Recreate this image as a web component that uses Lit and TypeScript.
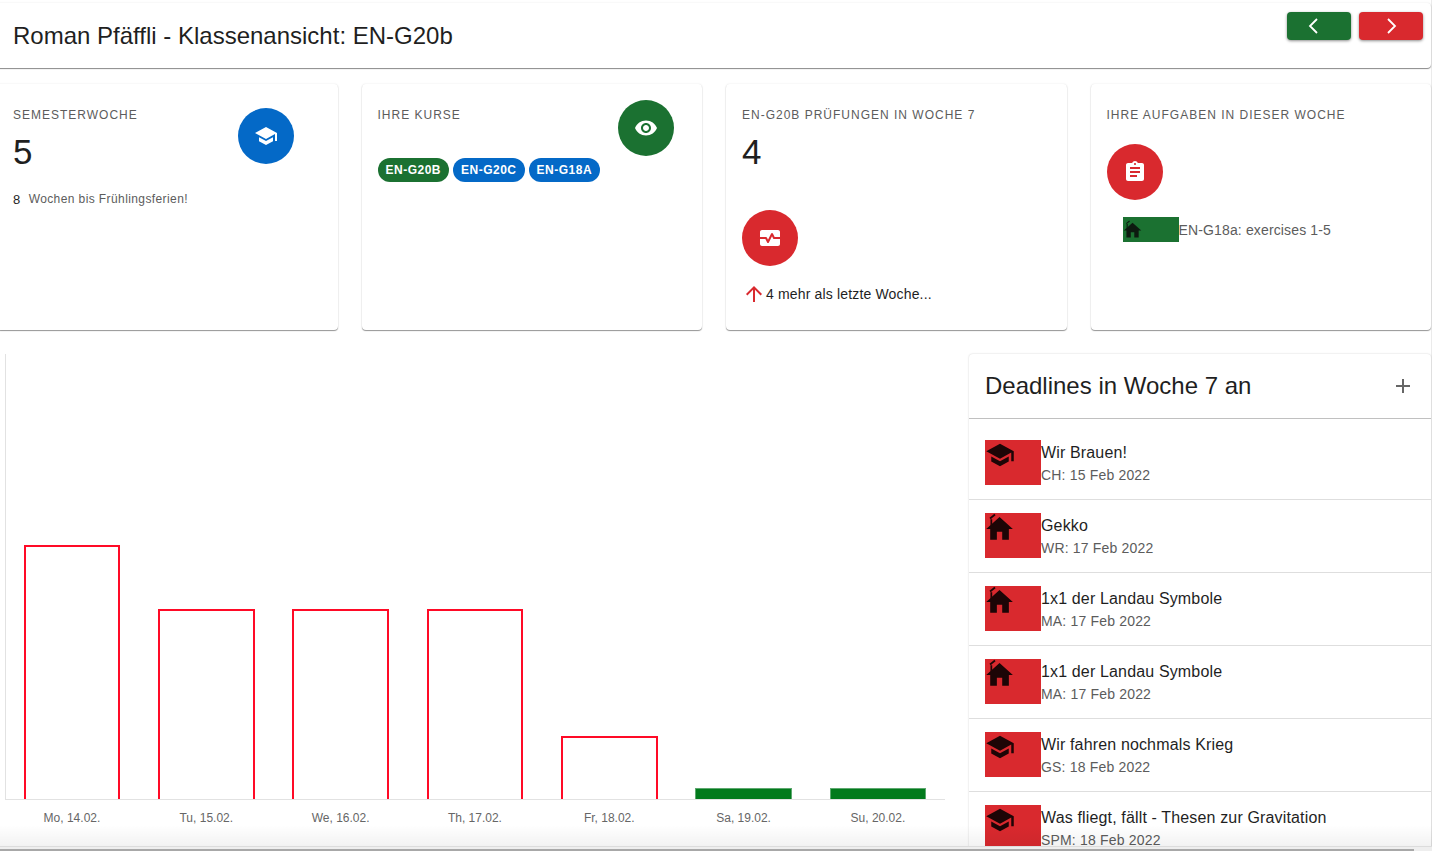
import { LitElement, html, css, svg } from "lit";
import { customElement } from "lit/decorators.js";

const ICONS = {
    school: svg`<path d="M5 13.18v4L12 21l7-3.82v-4L12 17l-7-3.82zM12 3L1 9l11 6 9-4.91V17h2V9L12 3z"/>`,
    eye: svg`<path d="M12 4.5C7 4.5 2.73 7.61 1 12c1.73 4.39 6 7.5 11 7.5s9.27-3.11 11-7.5c-1.73-4.39-6-7.5-11-7.5zM12 17c-2.76 0-5-2.24-5-5s2.24-5 5-5 5 2.24 5 5-2.24 5-5 5zm0-8c-1.66 0-3 1.34-3 3s1.34 3 3 3 3-1.34 3-3-1.34-3-3-3z"/>`,
    pulse: svg`<path d="M15.11 12.45L14 10.24l-3.11 6.21c-.16.33-.51.55-.89.55s-.73-.22-.89-.55L7.38 13H2v5c0 1.1.9 2 2 2h16c1.1 0 2-.9 2-2v-5h-6c-.38 0-.72-.21-.89-.55z"/><path d="M20 4H4c-1.1 0-2 .9-2 2v5h6c.38 0 .73.22.89.55L10 13.76l3.11-6.21c.34-.68 1.45-.68 1.79 0L16.62 11H22V6c0-1.1-.9-2-2-2z"/>`,
    clipboard: svg`<path d="M19 3h-4.18C14.4 1.84 13.3 1 12 1c-1.3 0-2.4.84-2.82 2H5c-1.1 0-2 .9-2 2v14c0 1.1.9 2 2 2h14c1.1 0 2-.9 2-2V5c0-1.1-.9-2-2-2zm-7 0c.55 0 1 .45 1 1s-.45 1-1 1-1-.45-1-1 .45-1 1-1zm2 14H7v-2h7v2zm3-4H7v-2h10v2zm0-4H7V7h10v2z"/>`,
    // house with a small chimney and smoke stroke
    home: svg`<g transform="translate(-1.1 0)"><path d="M10 20v-6h4v6h5v-8h3L12 3 2 12h3v8z"/><path d="M5.2 9.6V4.6h1.3v3.9z"/><path d="M4.9 4.1L8.6 1.1" fill="none" stroke="currentColor" stroke-width="1.3"/></g>`,
    arrowUp: svg`<path d="M4 12l1.41 1.41L11 7.83V20h2V7.83l5.58 5.59L20 12l-8-8-8 8z"/>`,
    left: svg`<path d="M15 5l-7 7 7 7" fill="none" stroke="currentColor" stroke-width="1.8"/>`,
    right: svg`<path d="M9 5l7 7-7 7" fill="none" stroke="currentColor" stroke-width="1.8"/>`,
    plus: svg`<path d="M19 13h-6v6h-2v-6H5v-2h6V5h2v6h6v2z"/>`,
};

const icon = (name: keyof typeof ICONS, cls = "") =>
    html`<svg class=${cls} viewBox="0 0 24 24" fill="currentColor">${ICONS[name]}</svg>`;

const BARS = [
    { label: "Mo, 14.02.", height: 254, free: false },
    { label: "Tu, 15.02.", height: 190, free: false },
    { label: "We, 16.02.", height: 190, free: false },
    { label: "Th, 17.02.", height: 190, free: false },
    { label: "Fr, 18.02.", height: 63, free: false },
    { label: "Sa, 19.02.", height: 11, free: true },
    { label: "Su, 20.02.", height: 11, free: true },
];

const DEADLINES = [
    { title: "Wir Brauen!", sub: "CH: 15 Feb 2022", kind: "school" },
    { title: "Gekko", sub: "WR: 17 Feb 2022", kind: "home" },
    { title: "1x1 der Landau Symbole", sub: "MA: 17 Feb 2022", kind: "home" },
    { title: "1x1 der Landau Symbole", sub: "MA: 17 Feb 2022", kind: "home" },
    { title: "Wir fahren nochmals Krieg", sub: "GS: 18 Feb 2022", kind: "school" },
    { title: "Was fliegt, fällt - Thesen zur Gravitation", sub: "SPM: 18 Feb 2022", kind: "school" },
] as const;

@customElement("app-root")
export class AppRoot extends LitElement {
    static styles = css`
    :host {
      display: block;
      position: relative;
      height: 851px;
      overflow: hidden;
      background: #ffffff;
      color: #1f1f1f;
      font-family: "Liberation Sans", Arial, sans-serif;
      box-shadow: inset -1px 0 0 #ebebeb;
    }

    .page {
      display: flex;
      flex-direction: column;
      padding-top: 3px;
      width: 1431px;
    }

    .toolbar {
      display: flex;
      align-items: center;
      justify-content: space-between;
      height: 65px;
      box-sizing: border-box;
      margin-left: -4px;
      padding: 0 8px 0 17px;
      border-radius: 4px;
      background: #ffffff;
      box-shadow: 0 1px 1px rgba(0, 0, 0, 0.45), 0 0 2px rgba(0, 0, 0, 0.1);
    }

    .toolbar h1 {
      margin: 0;
      font-size: 24px;
      font-weight: 400;
      line-height: 32px;
    }

    .nav {
      display: flex;
      gap: 8px;
      align-self: flex-start;
      margin-top: 9px;
    }

    .nav button {
      display: flex;
      align-items: center;
      justify-content: center;
      width: 64px;
      height: 28px;
      padding: 0;
      border: 0;
      border-radius: 4px;
      color: #ffffff;
      box-shadow: 0 1px 3px rgba(0, 0, 0, 0.45);
    }

    .nav button.green {
      padding-right: 10px;
    }

    .nav svg {
      width: 24px;
      height: 24px;
    }

    .green {
      background: #1b7131;
    }

    .red {
      background: #d9292e;
    }

    .blue {
      background: #0469c7;
    }

    .cards {
      display: grid;
      grid-template-columns: repeat(4, 340.5px);
      gap: 24px;
      margin: 16px 0 0 -3px;
      height: 246px;
    }

    .card {
      position: relative;
      box-sizing: border-box;
      padding: 24px 16px;
      border-radius: 4px;
      background: #ffffff;
      box-shadow: 0 1px 1px rgba(0, 0, 0, 0.4), 0 0 2px rgba(0, 0, 0, 0.1);
    }

    .overline {
      font-size: 12px;
      line-height: 14px;
      letter-spacing: 1px;
      color: #5c5c5c;
      text-transform: uppercase;
    }

    .big {
      margin-top: 10px;
      font-size: 35px;
      line-height: 40px;
    }

    .circle {
      display: flex;
      align-items: center;
      justify-content: center;
      width: 56px;
      height: 56px;
      border-radius: 50%;
      color: #ffffff;
    }

    .circle svg {
      width: 24px;
      height: 24px;
    }

    .corner {
      position: absolute;
      right: 44px;
      top: 24px;
    }

    .corner.high {
      right: 28px;
      top: 16px;
    }

    .hint {
      display: flex;
      align-items: center;
      gap: 8px;
      margin-top: 18px;
      font-size: 12px;
      line-height: 16px;
      letter-spacing: 0.4px;
      color: #5c5c5c;
    }

    .hint b {
      padding-top: 2px;
      font-weight: 400;
      color: #1f1f1f;
      font-size: 13px;
    }

    .chips {
      display: flex;
      gap: 4px;
      margin-top: 36px;
    }

    .chip {
      padding: 0 8px;
      height: 24px;
      border-radius: 12px;
      color: #ffffff;
      font-size: 12px;
      font-weight: 700;
      line-height: 24px;
      letter-spacing: 0.5px;
    }

    .exam-icon {
      margin-top: 38px;
    }

    .trend {
      display: flex;
      align-items: center;
      margin-top: 16px;
      font-size: 14px;
      line-height: 24px;
      letter-spacing: 0.16px;
    }

    .trend svg {
      width: 24px;
      height: 24px;
      color: #d9292e;
    }

    .task-icon {
      margin-top: 22px;
    }

    .task {
      display: flex;
      align-items: center;
      margin: 17px 0 0 16px;
      font-size: 14px;
      letter-spacing: 0.14px;
      color: #5c5c5c;
    }

    .task-box {
      display: block;
      width: 56px;
      height: 25px;
      color: #0d1a10;
      background: #1b7131;
    }

    .task-box svg {
      display: block;
      width: 21px;
      height: 21px;
      margin-top: 3px;
      overflow: visible;
    }

    .main {
      display: flex;
      margin-top: 24px;
      height: 500px;
    }

    .chart {
      flex: none;
      width: 940.3px;
      margin-left: 4.8px;
    }

    .plot {
      display: flex;
      align-items: flex-end;
      height: 446px;
      box-sizing: border-box;
      border-bottom: 1px solid #e2e2e2;
      box-shadow: inset 1px 0 0 #e2e2e2;
    }

    .slot {
      flex: 1;
      display: flex;
      justify-content: center;
    }

    .bar {
      width: 96.8px;
      box-sizing: border-box;
      border: 2px solid #ff0a26;
      border-bottom: 0;
    }

    .bar.free {
      border: 1px solid #5da86f;
      border-bottom: 0;
      background: #027a1c;
    }

    .labels {
      display: flex;
    }

    .labels span {
      flex: 1;
      padding-top: 10px;
      text-align: center;
      font-size: 12px;
      line-height: 16px;
      color: #666666;
    }

    .panel {
      flex: none;
      width: 462px;
      margin-left: 23.9px;
      border-radius: 4px;
      background: #ffffff;
      box-shadow: 0 0 2px rgba(0, 0, 0, 0.2);
    }

    .panel-head {
      display: flex;
      align-items: center;
      justify-content: space-between;
      height: 65px;
      box-sizing: border-box;
      padding: 0 16px;
      border-bottom: 1px solid #c0c0c0;
    }

    .panel-head h2 {
      margin: 0;
      font-size: 24px;
      font-weight: 400;
    }

    .panel-head svg {
      width: 24px;
      height: 24px;
      color: #666666;
    }

    .list {
      padding-top: 8px;
    }

    .row {
      display: flex;
      box-sizing: border-box;
      height: 73px;
      padding: 13px 16px 0;
      border-bottom: 1px solid #dedede;
    }

    .row-icon {
      flex: none;
      width: 56px;
      height: 45px;
      background: #d9292e;
      color: #1d0506;
    }

    .row-icon svg {
      display: block;
      width: 32px;
      height: 32px;
      overflow: visible;
    }

    .row-icon svg.school {
      width: 30px;
      height: 30px;
    }

    .row-title {
      font-size: 16px;
      line-height: 24px;
      letter-spacing: 0.15px;
      margin-top: 1px;
    }

    .row-sub {
      font-size: 14px;
      line-height: 20px;
      color: #5c5c5c;
      letter-spacing: 0.18px;
    }

    .fade {
      position: absolute;
      left: 0;
      right: 0;
      bottom: 0;
      height: 26px;
      background: linear-gradient(to bottom, rgba(0, 0, 0, 0), rgba(0, 0, 0, 0.05) 21px);
      pointer-events: none;
    }

    .fade::after {
      content: "";
      position: absolute;
      left: 0;
      right: 0;
      bottom: 0;
      height: 5px;
      box-sizing: border-box;
      background: #eeeeee;
      border-top: 1px solid #dcdcdc;
    }

    .scrollbar {
      position: absolute;
      left: 0;
      bottom: 0;
      width: 1414px;
      height: 2px;
      background: #a8a8a8;
    }
  `;

    render() {
        return html`
      <div class="page">
        <header class="toolbar">
          <h1>Roman Pfäffli - Klassenansicht: EN-G20b</h1>
          <div class="nav">
            <button class="green">${icon("left")}</button>
            <button class="red">${icon("right")}</button>
          </div>
        </header>

        <section class="cards">
          <div class="card">
            <div class="overline">Semesterwoche</div>
            <div class="big">5</div>
            <div class="circle blue corner">${icon("school")}</div>
            <div class="hint"><b>8</b><span>Wochen bis Frühlingsferien!</span></div>
          </div>
          <div class="card">
            <div class="overline">Ihre Kurse</div>
            <div class="circle green corner high">${icon("eye")}</div>
            <div class="chips">
              <span class="chip green">EN-G20B</span>
              <span class="chip blue">EN-G20C</span>
              <span class="chip blue">EN-G18A</span>
            </div>
          </div>
          <div class="card">
            <div class="overline">EN-G20b Prüfungen in Woche 7</div>
            <div class="big">4</div>
            <div class="circle red exam-icon">${icon("pulse")}</div>
            <div class="trend">${icon("arrowUp")}<span>4 mehr als letzte Woche...</span></div>
          </div>
          <div class="card">
            <div class="overline">Ihre Aufgaben in dieser Woche</div>
            <div class="circle red task-icon">${icon("clipboard")}</div>
            <div class="task">
              <span class="task-box">${icon("home")}</span>
              <span>EN-G18a: exercises 1-5</span>
            </div>
          </div>
        </section>

        <section class="main">
          <div class="chart">
            <div class="plot">
              ${BARS.map(
                  (b) => html`<div class="slot">
                    <div class="bar ${b.free ? "free" : ""}" style="height:${b.height}px"></div>
                  </div>`
              )}
            </div>
            <div class="labels">${BARS.map((b) => html`<span>${b.label}</span>`)}</div>
          </div>
          <div class="panel">
            <div class="panel-head">
              <h2>Deadlines in Woche 7 an</h2>
              ${icon("plus")}
            </div>
            <div class="list">
              ${DEADLINES.map(
                  (d) => html`<div class="row">
                    <div class="row-icon">${icon(d.kind, d.kind)}</div>
                    <div>
                      <div class="row-title">${d.title}</div>
                      <div class="row-sub">${d.sub}</div>
                    </div>
                  </div>`
              )}
            </div>
          </div>
        </section>
      </div>
      <div class="fade"></div>
      <div class="scrollbar"></div>
    `;
    }
}
